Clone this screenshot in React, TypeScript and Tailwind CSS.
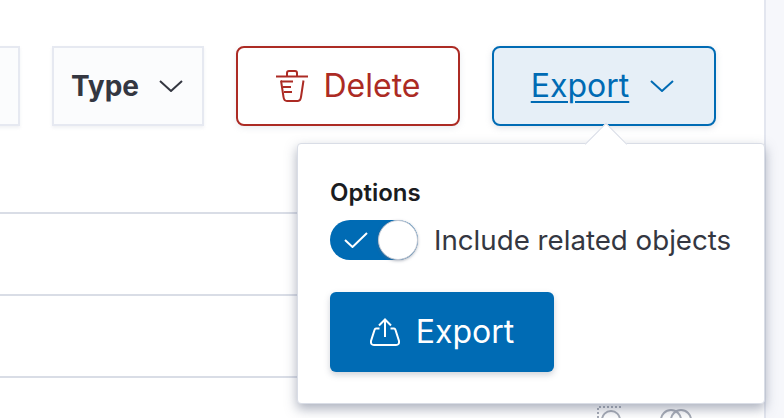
import React from "react";

const font = { fontFamily: "Inter, 'Liberation Sans', sans-serif" };

const Chevron = () => (
  <svg width="24" height="12" viewBox="0 0 24 12" fill="none" stroke="currentColor" strokeWidth="2">
    <path d="M1 1 L12 11 L23 1" />
  </svg>
);

const TrashIcon = () => (
  <svg width="32" height="32" viewBox="0 0 32 32" fill="none" stroke="#ac2b24" strokeWidth="2">
    <path d="M0 6.5 H32" />
    <path d="M11 6 V3 Q11 1 13 1 H19 Q21 1 21 3 V6" />
    <path d="M5 10.5 L7.5 27 Q8 31 11 31 H22 Q24.5 31 25 27 L27.5 10.5" />
    <path d="M5 11.5 H17 M7 17 H15 M8 22 H16" />
  </svg>
);

const UploadIcon = () => (
  <svg width="30" height="28" viewBox="0 0 30 28" fill="none" stroke="#fff" strokeWidth="2">
    <path d="M15 19 V1.5 M9 7.5 L15 1.5 L21 7.5" />
    <path d="M9.5 10.5 H6 Q5 10.5 4.5 12 L1 23 Q0.5 27 4 27 H26 Q29.5 27 29 23 L25.5 12 Q25 10.5 24 10.5 H20.5" />
  </svg>
);

const App = () => {
  return (
    <div className="relative flex w-[784px] h-[418px] overflow-hidden bg-[#f6f7fb]" style={font}>
      <main className="w-[766px] h-full bg-white border-r-2 border-[#e3e6ef] shrink-0 overflow-hidden">
        <div className="flex justify-end items-start gap-8 pt-[46px] pr-[48px]">
          <div className="w-[120px] h-[80px] shrink-0 bg-[#fbfcfd] border-2 border-[#e6e9f1] shadow-[0_2px_3px_rgba(152,162,179,0.15)]" />
          <button className="w-[152px] h-[80px] shrink-0 bg-[#fbfcfd] border-2 border-[#e6e9f1] flex items-center justify-center gap-[20px] pr-[2px] text-[#343741] text-[28px] font-bold shadow-[0_2px_3px_rgba(152,162,179,0.15)]">
            Type
            <Chevron />
          </button>
          <button className="w-[224px] h-[80px] shrink-0 bg-white border-2 border-[#ac2b24] rounded-[8px] flex items-center justify-center gap-[16px] text-[#ac2b24] text-[32px] shadow-[0_2px_6px_rgba(152,162,179,0.2)]">
            <TrashIcon />
            Delete
          </button>
          <button className="w-[224px] h-[80px] shrink-0 bg-[#e6eff7] border-2 border-[#006bb4] rounded-[8px] flex items-center justify-center gap-[21px] pr-[3px] text-[#006bb4] text-[32px] underline decoration-2 underline-offset-[4px] shadow-[0_2px_6px_rgba(152,162,179,0.3)]">
            Export
            <Chevron />
          </button>
        </div>

        <div className="mt-[86px]">
          <div className="h-[82px] border-t-2 border-[#d9dde6]" />
          <div className="h-[82px] border-t-2 border-[#d9dde6]" />
          <div className="h-[42px] border-t-2 border-[#d9dde6] flex justify-end items-end gap-[37px] pr-[72px] overflow-hidden">
            <svg width="26" height="12" viewBox="0 0 26 12" fill="none" stroke="#a6abb5" strokeWidth="2">
              <path d="M1 12 V1 H26" strokeDasharray="2 2" />
              <circle cx="14" cy="14" r="9" />
            </svg>
            <svg width="32" height="10" viewBox="0 0 32 10" fill="none" stroke="#a6abb5" strokeWidth="2">
              <circle cx="11" cy="12" r="10" />
              <circle cx="21" cy="12" r="10" />
            </svg>
          </div>
        </div>
      </main>

      {/* export popover */}
      <div className="absolute left-[297px] top-[143px] w-[468px] h-[261px] bg-white border border-[#d9dde6] rounded-[4px] pt-[35px] pl-[32px] shadow-[0_5px_12px_rgba(90,100,125,0.5)]">
        <div className="absolute -top-[15px] left-[293px] w-[30px] h-[30px] rotate-45 bg-white border-l border-t border-[#d9dde6]" />
        <div className="relative text-[#1a1c21] text-[24px] leading-[28px] font-semibold">Options</div>
        <div className="mt-[13px] flex items-center gap-[16px]">
          <div className="relative w-[88px] h-[40px] rounded-full bg-[#006bb4] flex items-center pl-[14px]">
            <svg width="24" height="16" viewBox="0 0 24 16" fill="none" stroke="#fff" strokeWidth="2">
              <path d="M1 8 L8.5 15 L23 1" />
            </svg>
            <div className="absolute right-0 top-0 w-[40px] h-[40px] rounded-full bg-white border border-[#c3c8d3] shadow-[0_1px_3px_rgba(100,110,130,0.5)]" />
          </div>
          <span className="text-[#343741] text-[27.7px] leading-[32px]">Include related objects</span>
        </div>
        <button className="mt-[32px] w-[224px] h-[80px] bg-[#006bb4] rounded-[6px] flex items-center justify-center gap-[16px] text-white text-[32px] shadow-[0_3px_6px_rgba(100,110,130,0.3)]">
          <UploadIcon />
          Export
        </button>
      </div>
    </div>
  );
};

export default App;
